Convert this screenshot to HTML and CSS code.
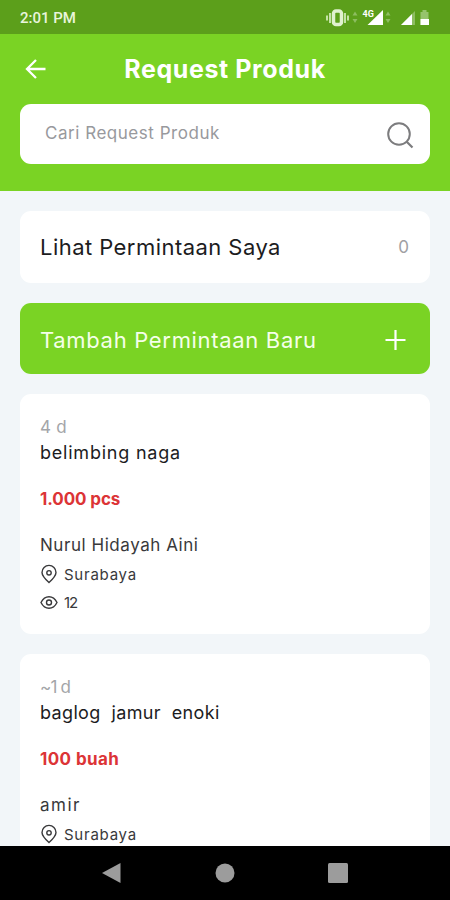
FILE: index.html
```html
<!DOCTYPE html>
<html lang="id">
<head>
    <meta charset="UTF-8">
    <meta name="viewport" content="width=device-width, initial-scale=1.0">
    <title>Request Produk</title>
    <link rel="stylesheet" href="styles.css">
</head>
<body>
    <div class="status-bar">
        <span class="clock">2:01 PM</span>
        <svg class="status-icons" width="108" height="20" viewBox="0 0 108 20">
            <!-- vibrate -->
            <path d="M1 7.500v5M4 5v10M19 5v10M22 7.500v5" fill="none" stroke="#c4e2a6" stroke-width="2"/>
            <rect x="7.500" y="3" width="8" height="13.500" rx="2.500" fill="none" stroke="#e0f1cf" stroke-width="3.500"/>
            <!-- data arrows -->
            <path d="M26.500 7.500l2.500-4 2.500 4zM26.500 11l2.500 4 2.500-4zM59.500 7.500l2.500-4 2.500 4zM59.500 11l2.500 4 2.500-4z" fill="#8dbd60"/>
            <!-- signals -->
            <path d="M41.500 17L57 2v15z" fill="#fff"/>
            <text x="36.500" y="8.500" class="network">4G</text>
            <path d="M75 17L89 3v14z" fill="#8dbd60"/>
            <path d="M75 17L86 6v11z" fill="#fff"/>
            <!-- battery -->
            <path d="M94.500 4h2V2h4v2h2v13h-8z" fill="#96c36c"/>
            <path d="M94.500 11h8.500v6h-8.500z" fill="#fff"/>
        </svg>
    </div>

    <header>
        <div class="title-row">
            <svg class="back" width="22" height="22" viewBox="0 0 22 22">
                <path d="M20.500 11H2M11 2L2 11l9 9" fill="none" stroke="#fff" stroke-width="2.300"/>
            </svg>
            <h1>Request Produk</h1>
        </div>
        <div class="search">
            <span class="placeholder">Cari Request Produk</span>
            <svg width="28" height="28" viewBox="0 0 28 28">
                <circle cx="13" cy="13" r="10.800" fill="none" stroke="#7c7c7e" stroke-width="2"/>
                <path d="M20.500 20.500l6 6" stroke="#7c7c7e" stroke-width="2.200"/>
            </svg>
        </div>
    </header>

    <main>
        <div class="card row">
            <span class="mine">Lihat Permintaan Saya</span>
            <span class="count">0</span>
        </div>
        <div class="card row add">
            <span class="new">Tambah Permintaan Baru</span>
            <svg width="22" height="22" viewBox="0 0 22 22">
                <path d="M11.500 1v20M1.500 11h20" stroke="#fff" stroke-width="2.200"/>
            </svg>
        </div>

        <div class="card request">
            <p class="age">4 d</p>
            <h2 class="name-1">belimbing naga</h2>
            <p class="amount">1.000 pcs</p>
            <p class="person person-1">Nurul Hidayah Aini</p>
            <p class="info">
                <svg width="18" height="20" viewBox="0 0 18 20">
                    <path d="M9 18.500C5 14.800 2 11.700 2 8.400a7 7 0 0 1 14 0c0 3.300-3 6.400-7 10.100z"/>
                    <circle cx="9" cy="8.800" r="2.200"/>
                </svg>
                <span class="city">Surabaya</span>
            </p>
            <p class="info">
                <svg width="18" height="20" viewBox="0 0 18 20">
                    <path d="M1 10.500c2-4 4.800-5.800 8-5.800s6 1.800 8 5.800c-2 4-4.800 5.800-8 5.800s-6-1.800-8-5.800z"/>
                    <circle cx="9" cy="10.500" r="2.500"/>
                </svg>
                <span class="views">12</span>
            </p>
        </div>

        <div class="card request">
            <p class="age age-2">~1 d</p>
            <h2 class="name-2">baglog&nbsp; jamur&nbsp; enoki</h2>
            <p class="amount amount-2">100 buah</p>
            <p class="person person-2">amir</p>
            <p class="info">
                <svg width="18" height="20" viewBox="0 0 18 20">
                    <path d="M9 18.500C5 14.800 2 11.700 2 8.400a7 7 0 0 1 14 0c0 3.300-3 6.400-7 10.100z"/>
                    <circle cx="9" cy="8.800" r="2.200"/>
                </svg>
                <span class="city">Surabaya</span>
            </p>
        </div>
    </main>

    <nav>
        <svg width="22" height="22" viewBox="0 0 22 22"><path d="M1 11L19.500 1v20z"/></svg>
        <svg width="22" height="22" viewBox="0 0 22 22"><circle cx="11" cy="11" r="9.500"/></svg>
        <svg width="22" height="22" viewBox="0 0 22 22"><rect x="1" y="1" width="20" height="20" rx="1.500"/></svg>
    </nav>
</body>
</html>
```
FILE: styles.css
```css
* {
    box-sizing: border-box;
}
body {
    display: flex;
    flex-direction: column;
    height: 900px;
    margin: 0;
    overflow: hidden;
    font-family: Inter, "Open Sans", sans-serif;
    background-color: #f2f6f9;
    color: #1c1c1e;
}
h1, h2, p {
    margin: 0;
}
svg {
    display: block;
    flex-shrink: 0;
}
.status-bar {
    display: flex;
    flex-shrink: 0;
    align-items: center;
    justify-content: space-between;
    height: 34px;
    padding: 2px 16px 0 20px;
    background-color: #5c9f1b;
}
.clock {
    font: 500 15px Roboto, sans-serif;
    color: #e9f5dc;
}
.network {
    font: bold 9px Roboto, sans-serif;
    fill: #fff;
}
header {
    flex-shrink: 0;
    height: 157px;
    padding: 0 20px;
    background-color: #7ad324;
}
.title-row {
    display: grid;
    grid-template-columns: 32px 1fr 32px;
    align-items: center;
    height: 70px;
}
.back {
    margin-left: 5px;
}
h1 {
    font-size: 25px;
    font-weight: 700;
    line-height: 30px;
    letter-spacing: 0.6px;
    text-align: center;
    white-space: nowrap;
    color: #fff;
}
.search {
    display: flex;
    align-items: center;
    justify-content: space-between;
    height: 60px;
    padding: 2px 16px 0 25px;
    background-color: #fff;
    border-radius: 11px;
}
.placeholder {
    padding-bottom: 4px;
    font-size: 17px;
    letter-spacing: 0.53px;
    color: #98999d;
}
main {
    display: flex;
    flex: 1;
    flex-direction: column;
    gap: 20px;
    min-height: 0;
    padding: 20px 20px 0;
    overflow: hidden;
}
.card {
    flex-shrink: 0;
    background-color: #fff;
    border-radius: 11px;
}
.row {
    display: flex;
    align-items: center;
    justify-content: space-between;
    height: 72px;
    padding: 0 21px 0 20px;
    font-size: 22px;
}
.mine {
    letter-spacing: 0.45px;
}
.new {
    letter-spacing: 0.68px;
}
.add {
    height: 71px;
    padding: 2px 24px 0 20px;
    background-color: #7ad324;
    color: #f5ffe9;
}
.count {
    font-size: 17px;
    color: #a0a0a3;
}
.request {
    height: 240px;
    padding: 20px 20px 0;
}
.age {
    font-size: 17px;
    line-height: 26px;
    letter-spacing: 0.3px;
    color: #a3a5a8;
}
.age-2 {
    letter-spacing: -0.8px;
}
h2 {
    font-size: 18px;
    font-weight: 400;
    line-height: 26px;
}
.name-1 {
    letter-spacing: 0.78px;
}
.name-2 {
    letter-spacing: 0.35px;
}
.amount {
    margin-top: 20px;
    font-size: 17px;
    font-weight: 700;
    line-height: 26px;
    letter-spacing: -0.1px;
    color: #dc3436;
}
.amount-2 {
    letter-spacing: 0.4px;
}
.person {
    margin-top: 20px;
    font-size: 17px;
    line-height: 26px;
    color: #39393b;
}
.person-1 {
    letter-spacing: 0.55px;
}
.person-2 {
    letter-spacing: 1.5px;
}
.info {
    display: flex;
    align-items: center;
    gap: 6px;
    height: 28px;
    padding-top: 4px;
    font-size: 15px;
    color: #39393b;
}
.info svg {
    fill: none;
    stroke: #39393b;
    stroke-width: 1.4;
}
.city {
    letter-spacing: 0.75px;
}
.views {
    letter-spacing: -1px;
}
nav {
    display: flex;
    flex-shrink: 0;
    align-items: center;
    justify-content: space-around;
    height: 54px;
    padding: 0 56px;
    background-color: #000;
}
nav svg {
    fill: #9c9c9c;
}
```
